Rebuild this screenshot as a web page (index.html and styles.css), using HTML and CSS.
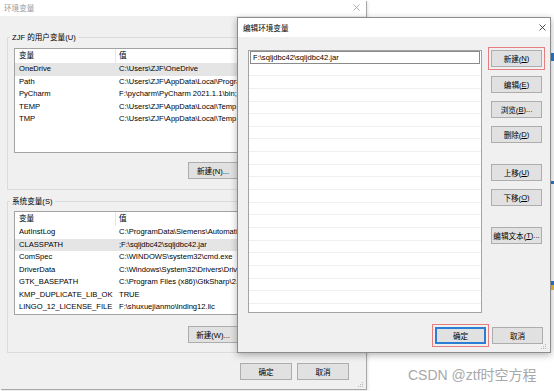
FILE: index.html
```html
<!DOCTYPE html>
<html lang="zh-CN">
<head>
<meta charset="utf-8">
<title>环境变量</title>
<link rel="stylesheet" href="styles.css">
</head>
<body>
<div class="desk">
  <div class="bit bit1"></div>
  <div class="bit bit2"></div>
  <div class="bit bit3"></div>

  <div class="win outer">
    <div class="o-title">
      <span>环境变量</span>
      <svg class="x" width="7" height="7" viewBox="0 0 7 7"><path d="M0.5 0.5L6.5 6.5M6.5 0.5L0.5 6.5" stroke="#a0a0a0" stroke-width="0.8" fill="none"/></svg>
    </div>
    <div class="group g1">
      <div class="legend">ZJF 的用户变量(U)</div>
      <div class="list l1">
        <div class="lh"><div class="c1">变量</div><div class="c2">值</div></div>
        <div class="row sel"><div class="c1">OneDrive</div><div class="c2">C:\Users\ZJF\OneDrive</div></div>
        <div class="row"><div class="c1">Path</div><div class="c2">C:\Users\ZJF\AppData\Local\Programs\Python\Python39\</div></div>
        <div class="row"><div class="c1">PyCharm</div><div class="c2">F:\pycharm\PyCharm 2021.1.1\bin;</div></div>
        <div class="row"><div class="c1">TEMP</div><div class="c2">C:\Users\ZJF\AppData\Local\Temp</div></div>
        <div class="row"><div class="c1">TMP</div><div class="c2">C:\Users\ZJF\AppData\Local\Temp</div></div>
      </div>
      <div class="gbtns b1">
        <div class="btn gb">新建(N)...</div>
        <div class="btn gb">编辑(E)...</div>
        <div class="btn gb">删除(D)</div>
      </div>
    </div>
    <div class="group g2">
      <div class="legend">系统变量(S)</div>
      <div class="list l2">
        <div class="lh"><div class="c1">变量</div><div class="c2">值</div></div>
        <div class="row"><div class="c1">AutInstLog</div><div class="c2">C:\ProgramData\Siemens\Automation\Logfile</div></div>
        <div class="row sel"><div class="c1">CLASSPATH</div><div class="c2">;F:\sqljdbc42\sqljdbc42.jar</div></div>
        <div class="row"><div class="c1">ComSpec</div><div class="c2">C:\WINDOWS\system32\cmd.exe</div></div>
        <div class="row"><div class="c1">DriverData</div><div class="c2">C:\Windows\System32\Drivers\DriverData</div></div>
        <div class="row"><div class="c1">GTK_BASEPATH</div><div class="c2">C:\Program Files (x86)\GtkSharp\2.12\</div></div>
        <div class="row"><div class="c1">KMP_DUPLICATE_LIB_OK</div><div class="c2">TRUE</div></div>
        <div class="row"><div class="c1">LINGO_12_LICENSE_FILE</div><div class="c2">F:\shuxuejianmo\lndlng12.lic</div></div>
      </div>
      <div class="gbtns b2">
        <div class="btn gb">新建(W)...</div>
        <div class="btn gb">编辑(I)...</div>
        <div class="btn gb">删除(L)</div>
      </div>
    </div>
    <div class="o-foot">
      <div class="btn fb">确定</div>
      <div class="btn fb">取消</div>
    </div>
    <svg class="grip og" width="6" height="6" viewBox="0 0 6 6"><g fill="#b8b8b8"><rect x="4" y="0" width="1" height="1"/><rect x="2" y="2" width="1" height="1"/><rect x="4" y="2" width="1" height="1"/><rect x="0" y="4" width="1" height="1"/><rect x="2" y="4" width="1" height="1"/><rect x="4" y="4" width="1" height="1"/></g></svg>
  </div>

  <div class="win dialog">
    <div class="d-title">
      <span>编辑环境变量</span>
      <svg class="x" width="7" height="7" viewBox="0 0 7 7"><path d="M0.5 0.5L6.5 6.5M6.5 0.5L0.5 6.5" stroke="#222" stroke-width="0.8" fill="none"/></svg>
    </div>
    <div class="d-main">
      <div class="dlist">
        <div class="drow erow">F:\sqljdbc42\sqljdbc42.jar</div>
        <div class="drow"></div><div class="drow"></div><div class="drow"></div><div class="drow"></div>
        <div class="drow"></div><div class="drow"></div><div class="drow"></div><div class="drow"></div>
        <div class="drow"></div><div class="drow"></div><div class="drow"></div><div class="drow"></div>
        <div class="drow"></div><div class="drow"></div><div class="drow"></div><div class="drow"></div>
        <div class="drow"></div><div class="drow"></div><div class="drow"></div><div class="drow"></div>
      </div>
      <div class="dbtns">
        <div class="btn db mark">新建(<u>N</u>)</div>
        <div class="btn db m9">编辑(<u>E</u>)</div>
        <div class="btn db m8">浏览(<u>B</u>)...</div>
        <div class="btn db m8">删除(<u>D</u>)</div>
        <div class="btn db m21">上移(<u>U</u>)</div>
        <div class="btn db m8">下移(<u>O</u>)</div>
        <div class="btn db m21">编辑文本(<u>T</u>)...</div>
      </div>
    </div>
    <div class="d-foot">
      <div class="btn db def mark">确定</div>
      <div class="btn db">取消</div>
    </div>
    <svg class="grip dg" width="6" height="6" viewBox="0 0 6 6"><g fill="#b8b8b8"><rect x="4" y="0" width="1" height="1"/><rect x="2" y="2" width="1" height="1"/><rect x="4" y="2" width="1" height="1"/><rect x="0" y="4" width="1" height="1"/><rect x="2" y="4" width="1" height="1"/><rect x="4" y="4" width="1" height="1"/></g></svg>
  </div>

  <div class="watermark">CSDN @ztf时空方程</div>
</div>
</body>
</html>
```
FILE: styles.css
```css
* { box-sizing: border-box; }
html, body { margin: 0; padding: 0; }
body {
  width: 554px;
  height: 391px;
  overflow: hidden;
  background: #fff;
  font-family: "Liberation Sans", "Noto Sans CJK SC", sans-serif;
  font-size: 7.6px;
  color: #000;
}
.desk { position: relative; width: 554px; height: 391px; }

.bit { position: absolute; background: #2b79d0; }
.bit1 { left: 551px; top: 53px; width: 3px; height: 8px; }
.bit2 { left: 551px; top: 181px; width: 3px; height: 3px; }
.bit3 { left: 551px; top: 281px; width: 3px; height: 9px; background: linear-gradient(#2b79d0 0 50%, #e8b83a 50%); }

.win { position: absolute; background: #f0f0f0; }

/* outer window */
.outer {
  left: 0; top: 0; width: 366px; height: 389px;
  box-shadow: 1px 1px 0 #a8a8a8, 2px 2px 3px rgba(0,0,0,0.12);
}
.o-title {
  height: 16px;
  background: #fff;
  color: #9a9a9a;
  display: flex;
  align-items: center;
  justify-content: space-between;
  padding: 0 6px 2px 4px;
}
.group {
  margin: 0 7px;
  border: 1px solid #dcdcdc;
  padding: 0 6px;
}
.g1 { margin-top: 21px; padding-bottom: 10px; }
.g2 { margin-top: 11px; padding-bottom: 9px; }
.legend {
  width: max-content;
  height: 11px;
  line-height: 11px;
  margin: -6px 0 0 -4px;
  padding: 0 2px;
  background: #f0f0f0;
}
.list {
  background: #fff;
  border: 1px solid #a3a3a3;
  overflow: hidden;
  white-space: nowrap;
}
.l1 { margin-top: 5px; height: 105px; }
.l2 { margin-top: 4px; height: 104px; }
.lh { display: flex; height: 14px; line-height: 14px; }
.lh .c1 { border-right: 1px solid #e5e5e5; }
.row { display: flex; height: 12.5px; line-height: 12.5px; }
.row.sel { background: #e5e5e5; }
.c1 { width: 101px; flex: none; padding-left: 4px; overflow: hidden; }
.c2 { padding-left: 3px; }

.gbtns { display: flex; gap: 5px; padding-left: 174px; }
.b1 { margin-top: 9px; }
.b2 { margin-top: 11px; }

.btn {
  height: 17px;
  background: #e1e1e1;
  border: 1px solid #adadad;
  display: flex;
  align-items: center;
  justify-content: center;
  white-space: nowrap;
  flex: none;
}
.gb { width: 50px; }
.o-foot {
  display: flex;
  justify-content: flex-end;
  gap: 5px;
  margin-top: 10px;
  padding-right: 17px;
}
.fb { width: 52px; }

.grip { position: absolute; }
.og { right: 2px; bottom: 1px; }
.dg { right: 3px; bottom: 2px; }

/* dialog */
.dialog {
  left: 237px; top: 17px; width: 314px; height: 336px;
  border: 1px solid #8c8c8c;
  box-shadow: 0 2px 7px rgba(0,0,0,0.3);
}
.d-title {
  height: 19px;
  background: #fff;
  display: flex;
  align-items: center;
  justify-content: space-between;
  padding: 0 4px 0 5px;
}
.d-main {
  display: flex;
  gap: 9px;
  padding: 13px 7px 0 10px;
}
.dlist {
  width: 234px;
  height: 263px;
  background: #fff;
  border: 1px solid #a3a3a3;
  overflow: hidden;
}
.drow {
  height: 12.65px;
  border-bottom: 1px solid #f0f0f0;
  line-height: 11.5px;
  white-space: nowrap;
}
.erow {
  margin: 0 1px;
  border: 1px solid #8a8a8a;
  padding-left: 2px;
}
.dbtns { display: flex; flex-direction: column; }
.db { width: 51px; }
.m8 { margin-top: 8px; }
.m9 { margin-top: 9px; }
.m21 { margin-top: 21px; }
.mark { outline: 1px solid #e57e7e; outline-offset: 2px; }
.def { border-color: #2a7fd4; box-shadow: inset 0 0 0 1px #2a7fd4; }
.d-foot {
  display: flex;
  justify-content: flex-end;
  gap: 6px;
  margin-top: 14px;
  padding-right: 7px;
}
u { text-decoration: underline; text-underline-offset: 1px; }

.watermark {
  position: absolute;
  left: 408px;
  top: 367px;
  font-size: 14px;
  line-height: 16px;
  color: #a8a8a8;
  white-space: nowrap;
}
```
